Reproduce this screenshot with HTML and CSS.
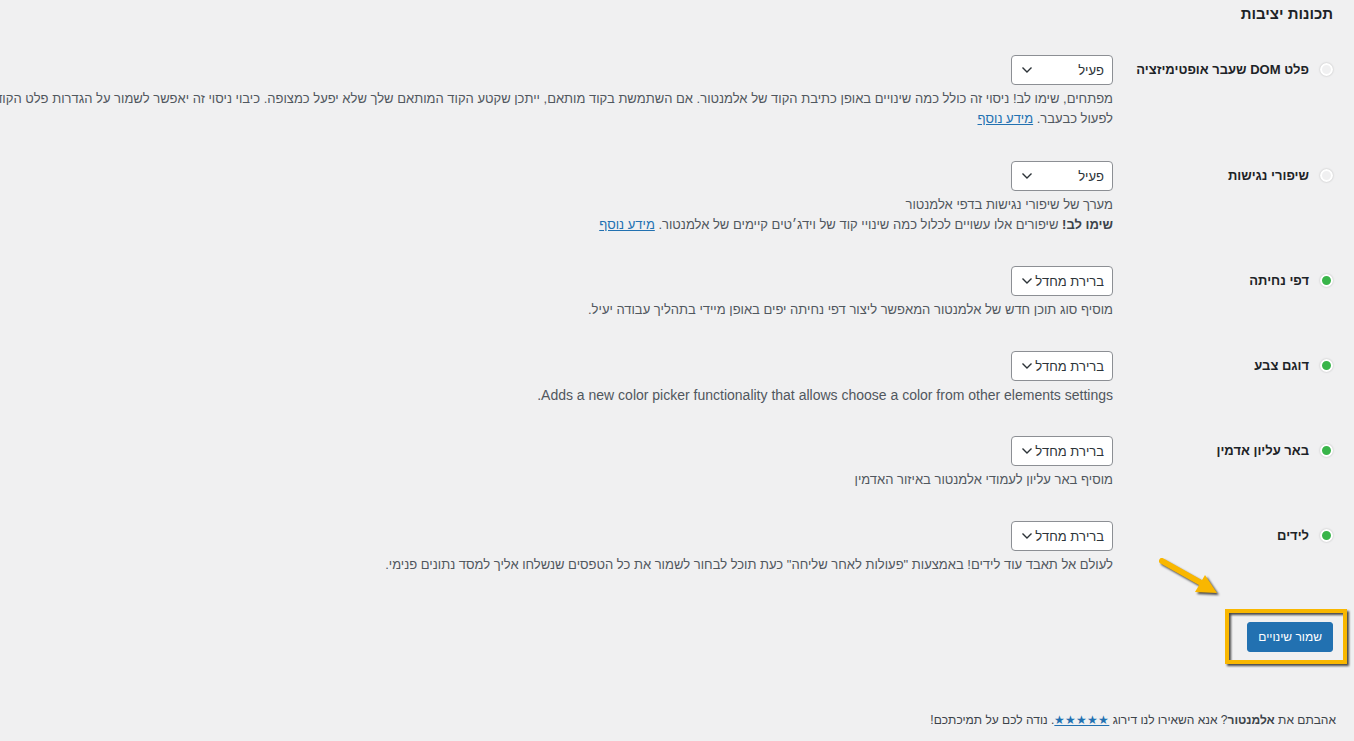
FILE: index.html
```html
<!DOCTYPE html>
<html lang="he" dir="rtl">
<head>
    <meta charset="UTF-8">
    <meta name="viewport" content="width=device-width, initial-scale=1.0">
    <title>ניסויים</title>
    <link rel="stylesheet" href="styles.css">
</head>
<body>
    <div class="wrap">
        <h2 class="section-title">תכונות יציבות</h2>

        <!-- Experiments -->
        <table class="form-table">
            <tbody>
                <tr class="first-row">
                    <th><span class="dot"></span><span>פלט DOM שעבר אופטימיזציה</span></th>
                    <td>
                        <div class="select"><span>פעיל</span><svg width="12" height="8" viewBox="0 0 12 8"><path d="M1.5 1.5 6 6l4.5-4.5" fill="none" stroke="#2c3338" stroke-width="1.4"/></svg></div>
                        <p class="description">מפתחים, שימו לב! ניסוי זה כולל כמה שינויים באופן כתיבת הקוד של אלמנטור. אם השתמשת בקוד מותאם, ייתכן שקטע הקוד המותאם שלך שלא יפעל כמצופה. כיבוי ניסוי זה יאפשר לשמור על הגדרות פלט הקוד הקודמות של אלמנטור, ולגרום לקוד הזה<br>לפעול כבעבר. <a href="#">מידע נוסף</a></p>
                    </td>
                </tr>
                <tr>
                    <th><span class="dot"></span><span>שיפורי נגישות</span></th>
                    <td>
                        <div class="select"><span>פעיל</span><svg width="12" height="8" viewBox="0 0 12 8"><path d="M1.5 1.5 6 6l4.5-4.5" fill="none" stroke="#2c3338" stroke-width="1.4"/></svg></div>
                        <p class="description">מערך של שיפורי נגישות בדפי אלמנטור<br><strong>שימו לב!</strong> שיפורים אלו עשויים לכלול כמה שינויי קוד של וידג׳טים קיימים של אלמנטור. <a href="#">מידע נוסף</a></p>
                    </td>
                </tr>
                <tr>
                    <th><span class="dot active"></span><span>דפי נחיתה</span></th>
                    <td>
                        <div class="select"><span>ברירת מחדל</span><svg width="12" height="8" viewBox="0 0 12 8"><path d="M1.5 1.5 6 6l4.5-4.5" fill="none" stroke="#2c3338" stroke-width="1.4"/></svg></div>
                        <p class="description">מוסיף סוג תוכן חדש של אלמנטור המאפשר ליצור דפי נחיתה יפים באופן מיידי בתהליך עבודה יעיל.</p>
                    </td>
                </tr>
                <tr>
                    <th><span class="dot active"></span><span>דוגם צבע</span></th>
                    <td>
                        <div class="select"><span>ברירת מחדל</span><svg width="12" height="8" viewBox="0 0 12 8"><path d="M1.5 1.5 6 6l4.5-4.5" fill="none" stroke="#2c3338" stroke-width="1.4"/></svg></div>
                        <p class="description latin">Adds a new color picker functionality that allows choose a color from other elements settings.</p>
                    </td>
                </tr>
                <tr>
                    <th><span class="dot active"></span><span>באר עליון אדמין</span></th>
                    <td>
                        <div class="select"><span>ברירת מחדל</span><svg width="12" height="8" viewBox="0 0 12 8"><path d="M1.5 1.5 6 6l4.5-4.5" fill="none" stroke="#2c3338" stroke-width="1.4"/></svg></div>
                        <p class="description">מוסיף באר עליון לעמודי אלמנטור באיזור האדמין</p>
                    </td>
                </tr>
                <tr>
                    <th><span class="dot active"></span><span>לידים</span></th>
                    <td>
                        <div class="select"><span>ברירת מחדל</span><svg width="12" height="8" viewBox="0 0 12 8"><path d="M1.5 1.5 6 6l4.5-4.5" fill="none" stroke="#2c3338" stroke-width="1.4"/></svg></div>
                        <p class="description">לעולם אל תאבד עוד לידים! באמצעות "פעולות לאחר שליחה" כעת תוכל לבחור לשמור את כל הטפסים שנשלחו אליך למסד נתונים פנימי.</p>
                    </td>
                </tr>
            </tbody>
        </table>

        <p class="submit">
            <span class="submit-holder">
                <!-- annotation -->
                <svg class="arrow" width="64" height="42" viewBox="0 0 64 42">
                    <path d="M5 6 46 29" stroke="#f9b700" stroke-width="6" stroke-linecap="round"/>
                    <path d="M48 20 60 38 38 37Z" fill="#f9b700"/>
                </svg>
                <span class="highlight"></span>
                <button class="button-primary">שמור שינויים</button>
            </span>
        </p>
    </div>

    <div class="footer">
        <p>אהבתם את <strong>אלמנטור</strong>? אנא השאירו לנו דירוג <a href="#">★★★★★</a>. נודה לכם על תמיכתכם!</p>
    </div>
</body>
</html>
```

FILE: styles.css
```css
html, body {
    margin: 0;
    padding: 0;
}
body {
    font-family: "Liberation Sans", Arial, sans-serif;
    font-size: 13px;
    color: #3c434a;
    background-color: #f0f0f1;
    overflow: hidden;
    min-height: 100vh;
    display: flex;
    flex-direction: column;
}
a {
    color: #2271b1;
}
.wrap {
    width: 1720px;
    margin-right: 21px;
}
.section-title {
    margin: 0;
    padding-top: 4px;
    font-size: 15px;
    line-height: 20px;
    color: #1d2327;
}
.form-table {
    width: 100%;
    border-collapse: collapse;
    margin-top: 16px;
}
.form-table th {
    width: 200px;
    padding: 20px 0 20px 10px;
    vertical-align: top;
    text-align: right;
    white-space: nowrap;
    font-size: 13px;
    line-height: 18px;
    color: #1d2327;
}
.form-table th span:last-child {
    vertical-align: middle;
}
.form-table td {
    padding: 15px 10px 16px;
    vertical-align: top;
}
.form-table .first-row td {
    padding-bottom: 17px;
}
.dot {
    display: inline-block;
    vertical-align: middle;
    width: 9px;
    height: 9px;
    margin-left: 11px;
    border: 2px solid #fff;
    border-radius: 50%;
    background-color: #f0f0f1;
    box-shadow: 0 0 2px rgba(0, 0, 0, 0.25);
}
.dot.active {
    background-color: #39b54a;
}
.select {
    display: flex;
    align-items: center;
    justify-content: space-between;
    box-sizing: border-box;
    width: 102px;
    height: 30px;
    padding: 0 8px 0 9px;
    background-color: #fff;
    border: 1px solid #8c8f94;
    border-radius: 4px;
    white-space: nowrap;
    font-size: 13px;
    color: #2c3338;
}
.description {
    margin: 4px 0 0;
    line-height: 20px;
    font-size: 13px;
    color: #50575e;
}
.description.latin {
    font-size: 14px;
}
.description strong {
    color: #3c434a;
}
.submit {
    margin: 0;
    padding-top: 31px;
}
.submit-holder {
    display: inline-block;
    position: relative;
}
.button-primary {
    display: block;
    height: 30px;
    padding: 0 10px;
    font-family: inherit;
    font-size: 12px;
    color: #fff;
    background-color: #2271b1;
    border: 1px solid #2271b1;
    border-radius: 3px;
    cursor: pointer;
}
.highlight {
    position: absolute;
    top: -13px;
    bottom: -12px;
    right: -14px;
    left: -22px;
    border: 4px solid #f9b700;
    filter: drop-shadow(2px 2px 1px rgba(0, 0, 0, 0.7));
}
.arrow {
    position: absolute;
    left: -90px;
    top: -67px;
    filter: drop-shadow(2px 2px 1px rgba(0, 0, 0, 0.7));
}
.footer {
    margin-top: auto;
    padding: 0 18px 11px;
}
.footer p {
    margin: 0;
    line-height: 20px;
    font-size: 12px;
    color: #3c434a;
}
```
